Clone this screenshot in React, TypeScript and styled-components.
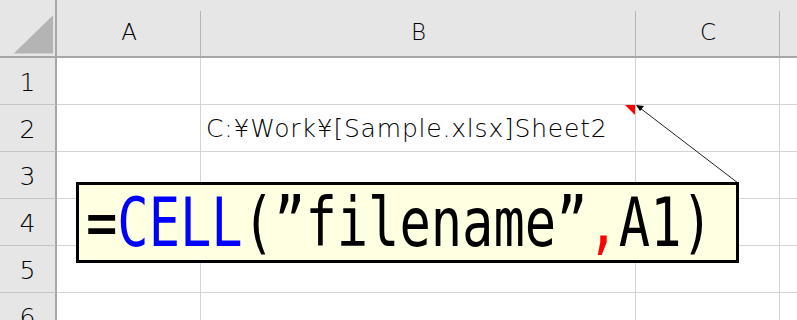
import styled, { createGlobalStyle } from 'styled-components';

const GlobalStyle = createGlobalStyle`
  html, body {
    margin: 0;
    padding: 0;
    background: #ffffff;
    overflow: hidden;
  }
`;

const columns = ['A', 'B', 'C', ''];
const rows = [1, 2, 3, 4, 5, 6];

export default function App() {
  return (
    <Sheet>
      <GlobalStyle />
      <Grid>
        <Corner>
          <svg width="56" height="56" viewBox="0 0 56 56">
            <polygon points="14,54 54,54 54,15" fill="#b4b4b4" />
          </svg>
        </Corner>
        {columns.map((c, i) => (
          <ColHead key={i} last={i === columns.length - 1}>{c}</ColHead>
        ))}
        {rows.map(r => (
          <Row key={r}>
            <RowHead>{r}</RowHead>
            {columns.map((_, i) => (
              <Cell key={i} last={i === columns.length - 1}>
                {r === 2 && i === 1 && (
                  <>
                    <CellText>C:¥Work¥[Sample.xlsx]Sheet2</CellText>
                    <CommentMark />
                  </>
                )}
              </Cell>
            ))}
          </Row>
        ))}
      </Grid>
      <Arrow width="797" height="320" viewBox="0 0 797 320">
        <line x1="738" y1="183" x2="640" y2="108" stroke="#222" strokeWidth="1" />
        <polygon points="636,105 644,106 640,111" fill="#000" />
      </Arrow>
      <Comment>
        <Formula>
          =<Fn>CELL</Fn>(”filename”<Sep>,</Sep>A1)
        </Formula>
      </Comment>
    </Sheet>
  );
}

const Sheet = styled.div`
  position: relative;
  width: 797px;
  height: 320px;
  overflow: hidden;
  font-family: "DejaVu Sans", "Noto Sans CJK JP", sans-serif;
  font-weight: 200;
  color: #000;
`;

const Grid = styled.div`
  display: grid;
  grid-template-columns: 57px 144px 435px 144px 1fr;
  grid-template-rows: 58px repeat(6, 47px);
`;

const Row = styled.div`
  display: contents;
`;

const Corner = styled.div`
  background: #e6e6e6;
  border-right: 2px solid #a6a6a6;
  border-bottom: 2px solid #a6a6a6;
  box-sizing: border-box;
  display: flex;
  align-items: flex-end;
  justify-content: flex-end;
  overflow: hidden;
  svg { display: block; }
`;

const ColHead = styled.div<{ last?: boolean }>`
  position: relative;
  background: #e6e6e6;
  border-bottom: 2px solid #a6a6a6;
  box-sizing: border-box;
  display: flex;
  align-items: center;
  justify-content: center;
  padding-top: 8px;
  font-size: 23px;
  &::after {
    content: '';
    position: absolute;
    right: 0;
    top: 11px;
    bottom: 0;
    width: 1px;
    background: ${p => (p.last ? 'transparent' : '#b4b4b4')};
  }
`;

const RowHead = styled.div`
  background: #e6e6e6;
  border-right: 2px solid #a6a6a6;
  border-bottom: 1px solid #c4c4c4;
  box-sizing: border-box;
  display: flex;
  align-items: center;
  justify-content: center;
  padding-top: 2px;
  font-size: 25px;
`;

const Cell = styled.div<{ last?: boolean }>`
  position: relative;
  border-right: ${p => (p.last ? 'none' : '1px solid #d4d4d4')};
  border-bottom: 1px solid #d4d4d4;
  box-sizing: border-box;
  display: flex;
  align-items: center;
  padding: 0 0 0 5px;
`;

const CellText = styled.span`
  font-size: 25px;
  letter-spacing: 0.8px;
  white-space: nowrap;
  color: #000;
`;

const CommentMark = styled.div`
  position: absolute;
  top: 0;
  right: 0;
  width: 0;
  height: 0;
  border-top: 10px solid #ff0000;
  border-left: 10px solid transparent;
`;

const Arrow = styled.svg`
  position: absolute;
  left: 0;
  top: 0;
  pointer-events: none;
`;

const Comment = styled.div`
  position: absolute;
  left: 76px;
  top: 182px;
  width: 663px;
  height: 81px;
  box-sizing: border-box;
  border: 3px solid #000;
  background: #ffffe1;
  display: flex;
  align-items: center;
  overflow: hidden;
`;

const Formula = styled.div`
  font-family: "DejaVu Sans Mono", "Liberation Mono", monospace;
  font-weight: 400;
  font-size: 67px;
  line-height: 1;
  white-space: nowrap;
  color: #000;
  transform-origin: left center;
  transform: scaleX(0.777);
  margin-left: 7px;
  margin-top: 2px;
`;

const Fn = styled.span`
  color: #0000ff;
`;

const Sep = styled.span`
  color: #ff0000;
`;
